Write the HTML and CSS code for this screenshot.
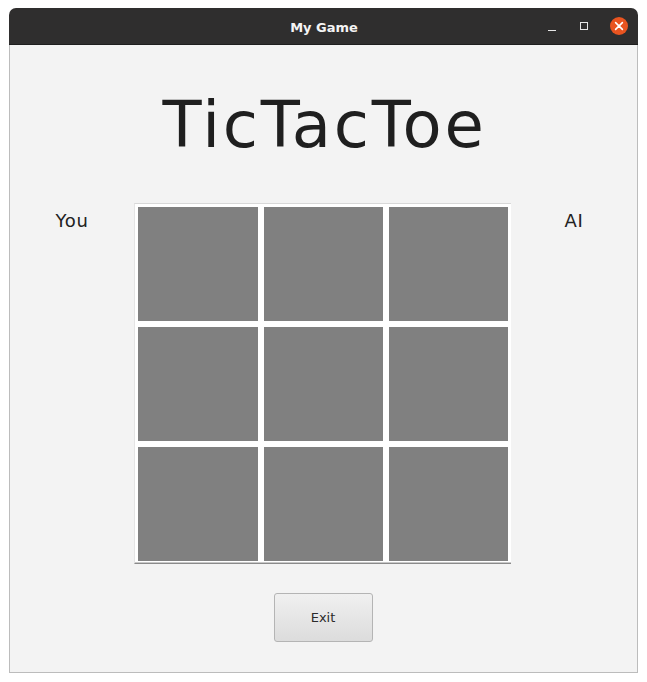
FILE: index.html
```html
<!DOCTYPE html>
<html>
<head>
<meta charset="utf-8">
<title>My Game</title>
<link rel="stylesheet" href="styles.css">
</head>
<body>
<div class="window">
  <header class="titlebar">
    <span class="title">My Game</span>
    <div class="controls">
      <span class="ctl min"></span>
      <span class="ctl max"></span>
      <span class="ctl close">
        <svg width="18" height="18" viewBox="0 0 18 18"><circle cx="9" cy="9" r="9" fill="#e95420"/><path d="M5.6 5.6 L12.4 12.4 M12.4 5.6 L5.6 12.4" stroke="#fff" stroke-width="1.6" stroke-linecap="round"/></svg>
      </span>
    </div>
  </header>
  <main class="content">
    <h1 class="heading">TicTacToe</h1>
    <div class="play">
      <div class="player">You</div>
      <div class="board">
        <div class="cell"></div><div class="cell"></div><div class="cell"></div>
        <div class="cell"></div><div class="cell"></div><div class="cell"></div>
        <div class="cell"></div><div class="cell"></div><div class="cell"></div>
      </div>
      <div class="player">AI</div>
    </div>
    <div class="actions">
      <button class="exit">Exit</button>
    </div>
  </main>
</div>
</body>
</html>
```

FILE: styles.css
```css
html, body {
  margin: 0;
  padding: 0;
  background: #ffffff;
}
body {
  width: 647px;
  height: 682px;
  overflow: hidden;
  font-family: "DejaVu Sans", sans-serif;
}
.window {
  margin: 8px 0 0 9px;
  width: 629px;
  height: 665px;
  display: flex;
  flex-direction: column;
}
.titlebar {
  height: 37px;
  flex: none;
  background: #2f2e2e;
  border-radius: 7px 7px 0 0;
  border-bottom: 1px solid #1e1e1e;
  box-sizing: border-box;
  position: relative;
  display: flex;
  align-items: center;
  justify-content: center;
  padding-top: 3px;
}
.title {
  color: #f4f4f4;
  font-weight: bold;
  font-size: 13px;
  margin-left: 1px;
}
.controls {
  position: absolute;
  right: 10px;
  top: 9px;
  display: flex;
  align-items: center;
}
.ctl {
  display: block;
}
.min {
  width: 8px;
  height: 1px;
  background: #e6e6e6;
  margin-top: 8px;
  margin-right: 24px;
}
.max {
  width: 6px;
  height: 6px;
  border: 1px solid #e6e6e6;
  margin-right: 22px;
}
.close {
  width: 18px;
  height: 18px;
}
.close svg {
  display: block;
}
.content {
  flex: 1;
  background: #f3f3f3;
  border: 1px solid #bcbcbc;
  border-top: none;
  display: flex;
  flex-direction: column;
}
.heading {
  margin: 48px 0 0;
  font-weight: normal;
  font-size: 64px;
  line-height: 64px;
  letter-spacing: 2.7px;
  color: #1f1f1f;
  text-align: center;
  padding-left: 2px;
}
.play {
  margin-top: 46px;
  padding-right: 2px;
  display: grid;
  grid-template-columns: 1fr auto 1fr;
  align-items: start;
}
.player {
  text-align: center;
  font-size: 18px;
  letter-spacing: 0.6px;
  color: #222222;
  padding-top: 7px;
}
.player:last-child {
  padding-left: 2px;
}
.board {
  background: #ffffff;
  border-top: 1px solid #d8d8d8;
  border-left: 1px solid #e4e4e4;
  border-bottom: 1px solid #8a8a8a;
  box-shadow: inset 0 -1px 0 #c8c8c8;
  padding: 3px 3px 2px 3px;
  display: grid;
  grid-template-columns: 120px 119px 119px;
  grid-template-rows: 114px 114px 114px;
  gap: 6px;
}
.cell {
  background: #808080;
}
.actions {
  margin-top: 29px;
  display: flex;
  justify-content: center;
}
.exit {
  width: 99px;
  height: 49px;
  margin-left: -1px;
  border: 1px solid #b4b4b4;
  border-radius: 3px;
  background: linear-gradient(#f0f0f0, #dcdcdc);
  font-family: "DejaVu Sans", sans-serif;
  font-size: 13px;
  color: #2b2b2b;
  padding: 0;
}
```
